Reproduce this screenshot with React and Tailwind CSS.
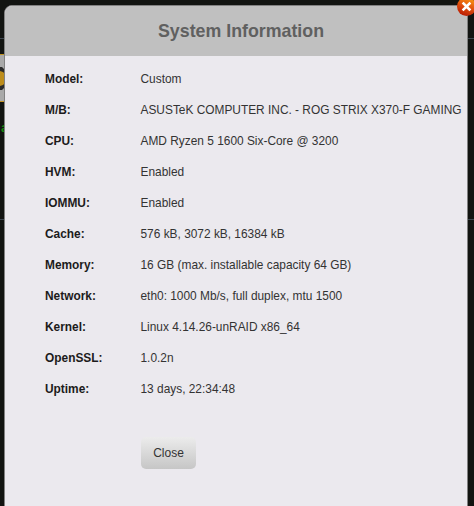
import React from 'react';

const rows = [
  { label: 'Model:', value: 'Custom' },
  { label: 'M/B:', value: 'ASUSTeK COMPUTER INC. - ROG STRIX X370-F GAMING' },
  { label: 'CPU:', value: 'AMD Ryzen 5 1600 Six-Core @ 3200' },
  { label: 'HVM:', value: 'Enabled' },
  { label: 'IOMMU:', value: 'Enabled' },
  { label: 'Cache:', value: '576 kB, 3072 kB, 16384 kB' },
  { label: 'Memory:', value: '16 GB (max. installable capacity 64 GB)' },
  { label: 'Network:', value: 'eth0: 1000 Mb/s, full duplex, mtu 1500' },
  { label: 'Kernel:', value: 'Linux 4.14.26-unRAID x86_64' },
  { label: 'OpenSSL:', value: '1.0.2n' },
  { label: 'Uptime:', value: '13 days, 22:34:48' },
];

// Page behind the dialog: two rules, edge of the case badge, a bit of green text
const Backdrop = () => (
  <div className="absolute inset-0 overflow-hidden">
    <div className="box-content h-[38px] border-b border-[#3d464e]"></div>
    <div className="box-content h-[180px] border-b border-[#3d464e]"></div>
    <svg className="absolute left-0 top-[54px]" width="5" height="48" viewBox="0 0 5 48">
      <rect width="5" height="48" fill="#a9a9a9" />
      <path d="M0 .5h5M0 47.5h5" stroke="#c39422" />
      <path d="M0 13l2 0 3 3v17l-3 3h-2z" fill="#2a2a2a" />
      <path d="M0 17l3 1 2 2v9l-2 2-3 1z" fill="#bd8d1c" />
    </svg>
    <span className="absolute left-[1px] top-[120px] text-[13px] font-bold leading-4 text-[#138a10]">a</span>
  </div>
);

const CloseBadge = () => (
  <button className="absolute -right-[9px] -top-[9px] h-[19px] w-[19px]" aria-label="Close">
    <svg width="19" height="19" viewBox="0 0 19 19">
      <defs>
        <linearGradient id="badge" x1="0.8" y1="0" x2="0.4" y2="1">
          <stop offset="0.15" stopColor="#f58a12" />
          <stop offset="0.55" stopColor="#e0500e" />
          <stop offset="1" stopColor="#b91c04" />
        </linearGradient>
      </defs>
      <circle cx="9.5" cy="9.5" r="9.5" fill="url(#badge)" />
      <path d="M6.5 6.5l6 6M12.5 6.5l-6 6" stroke="#fff" strokeWidth="2.5" strokeLinecap="square" />
    </svg>
  </button>
);

const App = () => {
  return (
    <div className="relative h-[506px] w-[474px] overflow-hidden bg-[#121411] pl-1 pt-[5px] font-['Liberation_Sans',Arial,sans-serif]">
      <Backdrop />
      <div className="relative h-[520px] w-[464px] rounded-t-[8px] border border-[#818181] bg-[#ebe9ee]">
        <h1 className="flex h-[50px] items-center justify-center rounded-t-[7px] bg-[#c0c0c0] pl-[10px] text-[17.8px] font-bold text-[#606060]">
          System Information
        </h1>
        <div className="pl-10 pt-2 text-[11.9px] text-[#333]">
          {rows.map((row) => (
            <div key={row.label} className="flex h-[31px] items-center whitespace-nowrap">
              <span className="w-[95.5px] shrink-0 font-bold text-[#1c1b1b]">{row.label}</span>
              <span>{row.value}</span>
            </div>
          ))}
        </div>
        <button className="ml-[136px] mt-8 h-8 w-[55px] rounded-[5px] bg-linear-to-b from-[#ececec] to-[#c6c6c6] text-[12px] text-[#333]">
          Close
        </button>
        <CloseBadge />
      </div>
    </div>
  );
};

export default App;
